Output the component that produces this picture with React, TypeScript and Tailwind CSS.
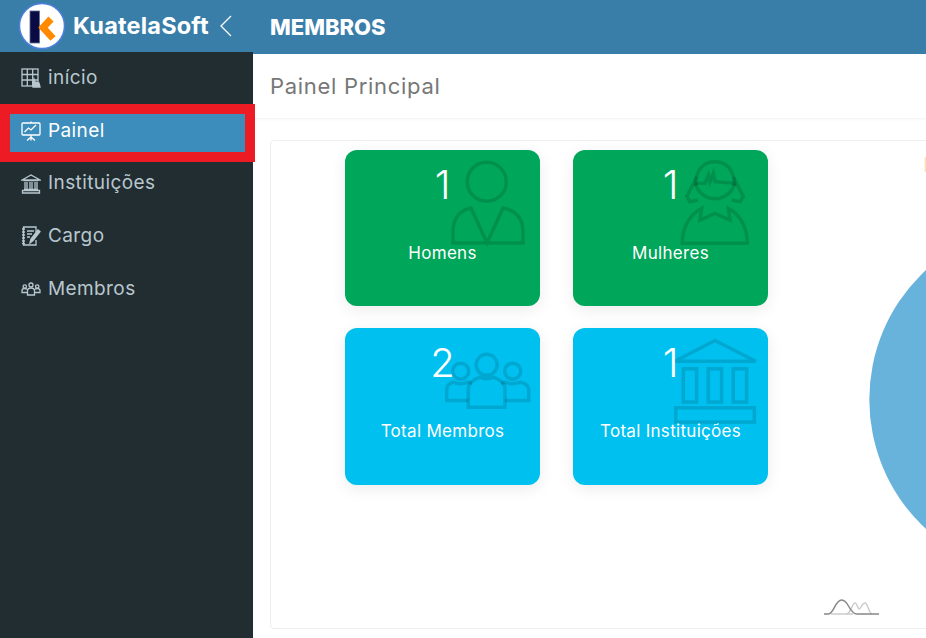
const font = "font-['Inter','Open_Sans',sans-serif]";

function IconGrid() {
  return (
    <svg viewBox="0 0 20 20" className="h-5 w-5" fill="none" stroke="currentColor" strokeWidth="1.300">
      <rect x="1" y="1" width="16" height="17" />
      <path d="M1 6.500h16M1 12h16M6.300 1v17M11.700 1v17" />
      <path d="M12 19v-5l1-3 1 3 4 1 1 4z" fill="currentColor" />
    </svg>
  );
}

function IconBoard() {
  return (
    <svg viewBox="0 0 20 20" className="h-5 w-5" fill="none" stroke="currentColor" strokeWidth="1.300">
      <rect x="1" y="2" width="18" height="12" rx="1" />
      <path d="M3.500 11l4-4 2.500 2 5-5M10 .5V2M10 14v2M10 16l-4 3.500M10 16l4 3.500M10 16v3.500" />
    </svg>
  );
}

function IconBank() {
  return (
    <svg viewBox="0 0 20 20" className="h-5 w-5" fill="none" stroke="currentColor" strokeWidth="1.300">
      <path d="M1 6L10 1l9 5zM2.500 6.500h15M1.500 16.500h17v2.500h-17z" />
      <path d="M4 8v7M6 8v7M9 8v7M11 8v7M14 8v7M16 8v7M3 15.500h14" />
    </svg>
  );
}

function IconNotes() {
  return (
    <svg viewBox="0 0 20 20" className="h-5 w-5" fill="none" stroke="currentColor" strokeWidth="1.300">
      <path d="M15 6V1H2.500v18H15v-5" />
      <path d="M1 3h3M1 6h3M1 9h3M1 12h3M1 15h3M1 17.500h3M6 5h7M6 8h5M6 11h3" />
      <path d="M9 17l1-4 7-9 2 1.500-7 9z" fill="currentColor" />
    </svg>
  );
}

function IconPeople() {
  return (
    <svg viewBox="0 0 20 20" className="h-5 w-5" fill="none" stroke="currentColor" strokeWidth="1.300">
      <circle cx="10" cy="6" r="2" />
      <circle cx="3.800" cy="7.500" r="1.700" />
      <circle cx="16.200" cy="7.500" r="1.700" />
      <path d="M6.500 16v-4q0-3 3.500-3t3.500 3v4zM6.500 13.500H1v-2q0-2 2.800-2 1.500 0 2.200 1M13.500 13.500H19v-2q0-2-2.800-2-1.500 0-2.200 1" />
    </svg>
  );
}

function Logo() {
  return (
    <svg viewBox="0 0 48 48" className="h-[48px] w-[48px]">
      <circle cx="24" cy="24" r="22.500" fill="#fff" stroke="#4d7fe0" strokeWidth="1.500" />
      <rect x="12" y="9" width="9.500" height="32" fill="#0a0a45" stroke="#5b6f8f" strokeWidth="0.800" />
      <path d="M33 17l-8 8.500 10 11" fill="none" stroke="#ff8a00" strokeWidth="7" />
    </svg>
  );
}

const cardIcons = {
  man: (
    <>
      <circle cx="141.700" cy="31.700" r="19.500" />
      <path d="M108 93V82Q108 62 126 58L142 93L158 58Q178 62 178 82V93Z" />
    </>
  ),
  woman: (
    <>
      <path d="M122.500 33.300A20 20 0 0 0 161.500 33.300" />
      <path d="M122.500 36C122.500 18 132 11.700 142 11.700S161.500 18 161.500 36" />
      <path d="M122.500 33.300H132L135.300 25L137 31.700L140.300 23.300L142 31.700L161.500 33.300" />
      <path d="M123.700 26.700L113.700 46.700L117 51.700L125.300 50M160.300 26.700L170.300 46.700L167 51.700L158.700 50" />
      <path d="M109.300 93.300C109.300 76 118 64 128.700 58.300L127 70L142 63.300L157 70L155.300 58.300C166 64 174.300 76 174.300 93.300Z" />
    </>
  ),
  people: (
    <>
      <circle cx="141.700" cy="36.300" r="10.500" />
      <circle cx="115.700" cy="42.700" r="8" />
      <circle cx="167.700" cy="42.700" r="8" />
      <path d="M123.300 78.700V60Q123.300 53 135 48.700Q141.700 52 148.300 48.700Q160 53 160 60V78.700Z" />
      <path d="M123.300 72H101.700V62Q101.700 55 108.300 53.700Q115.700 57 123 53.700L127 55" />
      <path d="M160 72H183.700V62Q183.700 55 175 53.700Q167.700 57 160 53.700L156 55" />
    </>
  ),
  bank: (
    <>
      <path d="M102 32.700L142 12L182.700 32.700Z" />
      <rect x="110.300" y="40.300" width="13.300" height="33.300" />
      <rect x="135.300" y="40.300" width="13.300" height="33.300" />
      <rect x="160.300" y="40.300" width="13.300" height="33.300" />
      <rect x="102.700" y="79.300" width="78.700" height="14.300" />
    </>
  ),
};

const navItems = [
  { label: "início", icon: <IconGrid /> },
  { label: "Painel", icon: <IconBoard />, active: true },
  { label: "Instituições", icon: <IconBank /> },
  { label: "Cargo", icon: <IconNotes /> },
  { label: "Membros", icon: <IconPeople /> },
];

const cards = [
  { value: 1, label: "Homens", icon: cardIcons.man, color: "bg-[#00a65a]" },
  { value: 1, label: "Mulheres", icon: cardIcons.woman, color: "bg-[#00a65a]" },
  { value: 2, label: "Total Membros", icon: cardIcons.people, color: "bg-[#00c0ef]" },
  { value: 1, label: "Total Instituições", icon: cardIcons.bank, color: "bg-[#00c0ef]" },
];

function StatCard({ value, label, icon, color }: { value: number; label: string; icon: React.ReactNode; color: string }) {
  return (
    <div className={`relative flex h-full flex-col items-center rounded-xl pt-[9px] text-white shadow-[0_4px_16px_rgba(0,0,0,0.08)] ${color}`}>
      <svg viewBox="0 0 195 156" className="absolute inset-0 h-full w-full" fill="none" stroke="rgba(0,0,0,0.13)" strokeWidth="3.500">
        {icon}
      </svg>
      <div className="relative text-[40px] leading-[52px] font-light">{value}</div>
      <div className="relative mt-[30px] text-[17px] leading-6 tracking-[0.3px]">{label}</div>
    </div>
  );
}

export default function App() {
  return (
    <div className={`flex h-[638px] w-[926px] overflow-hidden bg-white ${font}`}>
      <aside className="flex w-[253px] shrink-0 flex-col bg-[#222d32]">
        <div className="flex h-[52px] items-center bg-[#387ea9] pl-[18px]">
          <Logo />
          <span className="ml-[7px] text-[23.500px] font-bold tracking-[0.2px] text-white">KuatelaSoft</span>
          <svg viewBox="0 0 14 22" className="ml-[10px] h-[22px] w-[14px]" fill="none" stroke="#fff" strokeWidth="1.300">
            <path d="M12 1L2 11l10 10" />
          </svg>
        </div>
        <nav className="flex flex-col">
          {navItems.map((item) => (
            <a key={item.label} className={`relative flex h-[52.700px] items-center gap-[7px] pl-[21px] text-[19px] tracking-[0.4px] ${item.active ? "text-white" : "text-[#b8c7ce]"}`}>
              {item.active && <span className="absolute top-[9px] left-[10px] h-[38px] w-[235px] bg-[#3c8dbc] outline-[10px] outline-[#ed1c24]" />}
              <span className="relative">{item.icon}</span>
              <span className="relative">{item.label}</span>
            </a>
          ))}
        </nav>
      </aside>

      <main className="flex min-w-0 flex-1 flex-col overflow-hidden">
        <header className="flex h-[54px] shrink-0 items-center bg-[#387ea9] pl-[17px] text-[22px] font-extrabold text-white">MEMBROS</header>
        <div className="flex h-[64px] shrink-0 items-center pl-[17px] text-[22px] tracking-[0.7px] text-[#777] shadow-[0_1px_3px_rgba(0,0,0,0.06)]">Painel Principal</div>
        <section className="relative mt-[22px] ml-[17px] h-[489px] w-[800px] shrink-0 overflow-hidden rounded-sm border border-[#eee]">
          <div className="grid w-max grid-cols-[195px_195px] grid-rows-[156px_157px] gap-x-[33px] gap-y-[22px] pt-[9px] pl-[74px]">
            {cards.map((card) => (
              <StatCard key={card.label} {...card} />
            ))}
          </div>
          <svg viewBox="0 0 800 489" className="absolute top-0 left-0 h-[489px] w-[800px]" fill="none">
            <circle cx="774.500" cy="258.500" r="176.200" fill="#67b3db" />
            <path d="M654.500 16v15" stroke="#f6e7b8" strokeWidth="2" />
            <path d="M560 473H582" stroke="#ccc" strokeWidth="1.500" />
            <path d="M575 473C580 473 581 462 584 462C586 462 587 468 588 468C590 468 591 462 594 462C597 462 598 473 601 473" stroke="#ccc" strokeWidth="1.500" />
            <path d="M553 473H557C563 473 564 459 570.700 459C578 459 578 473 586 473H608" stroke="#888" strokeWidth="1.500" />
          </svg>
        </section>
      </main>
    </div>
  );
}
